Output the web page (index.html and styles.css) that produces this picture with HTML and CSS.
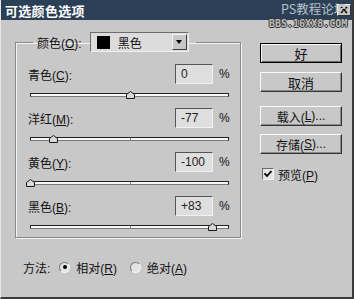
FILE: index.html
```html
<!DOCTYPE html>
<html lang="zh-CN">
<head>
    <meta charset="UTF-8">
    <title>可选颜色选项</title>
    <link rel="stylesheet" href="styles.css">
</head>
<body>
    <div class="window">
        <div class="titlebar">
            <span class="title">可选颜色选项</span>
            <span class="close">
                <svg width="12" height="10" viewBox="0 0 12 10"><path d="M3 2 L9 8 M9 2 L3 8" stroke="#000" stroke-width="1.6"/></svg>
            </span>
            <span class="mark">PS教程论坛</span>
            <span class="mark-url">BBS.16XX8.COM</span>
        </div>

        <div class="content">
            <div class="left">
                <fieldset class="group">
                    <legend class="legend">
                        <span class="legend-label">颜色(<u>O</u>):</span>
                        <span class="select">
                            <span class="swatch"></span>
                            <span class="select-text">黑色</span>
                            <span class="select-arrow"></span>
                        </span>
                    </legend>

                    <div class="row">
                        <div class="row-top">
                            <span class="row-label">青色(<u>C</u>):</span>
                            <span class="field">0</span>
                            <span class="pct">%</span>
                        </div>
                        <div class="slider">
                            <div class="track"></div>
                            <svg class="thumb" style="left: 50%;" width="9" height="8" viewBox="0 0 9 8"><polygon points="0.5,7.5 0.5,3.5 4.5,0.5 8.5,3.5 8.5,7.5" fill="#d8d8d8" stroke="#1a1a1a"/></svg>
                        </div>
                    </div>

                    <div class="row">
                        <div class="row-top">
                            <span class="row-label">洋红(<u>M</u>):</span>
                            <span class="field">-77</span>
                            <span class="pct">%</span>
                        </div>
                        <div class="slider">
                            <div class="track"></div>
                            <svg class="thumb" style="left: 11.5%;" width="9" height="8" viewBox="0 0 9 8"><polygon points="0.5,7.5 0.5,3.5 4.5,0.5 8.5,3.5 8.5,7.5" fill="#d8d8d8" stroke="#1a1a1a"/></svg>
                        </div>
                    </div>

                    <div class="row">
                        <div class="row-top">
                            <span class="row-label">黄色(<u>Y</u>):</span>
                            <span class="field">-100</span>
                            <span class="pct">%</span>
                        </div>
                        <div class="slider">
                            <div class="track"></div>
                            <svg class="thumb" style="left: 0%;" width="9" height="8" viewBox="0 0 9 8"><polygon points="0.5,7.5 0.5,3.5 4.5,0.5 8.5,3.5 8.5,7.5" fill="#d8d8d8" stroke="#1a1a1a"/></svg>
                        </div>
                    </div>

                    <div class="row">
                        <div class="row-top">
                            <span class="row-label">黑色(<u>B</u>):</span>
                            <span class="field">+83</span>
                            <span class="pct">%</span>
                        </div>
                        <div class="slider">
                            <div class="track"></div>
                            <svg class="thumb" style="left: 91.5%;" width="9" height="8" viewBox="0 0 9 8"><polygon points="0.5,7.5 0.5,3.5 4.5,0.5 8.5,3.5 8.5,7.5" fill="#d8d8d8" stroke="#1a1a1a"/></svg>
                        </div>
                    </div>
                </fieldset>

                <div class="method">
                    <span class="method-label">方法:</span>
                    <span class="radio checked"></span>
                    <span class="radio-text">相对(<u>R</u>)</span>
                    <span class="radio"></span>
                    <span class="radio-text">绝对(<u>A</u>)</span>
                </div>
            </div>

            <div class="right">
                <div class="btn default">好</div>
                <div class="btn btn-cancel">取消</div>
                <div class="btn btn-load">载入(<u>L</u>)...</div>
                <div class="btn btn-save">存储(<u>S</u>)...</div>
                <div class="preview">
                    <span class="checkbox">
                        <svg width="8" height="8" viewBox="0 0 8 8"><path d="M0.5 3.5 L3 6 L7.5 1" fill="none" stroke="#000" stroke-width="1.8"/></svg>
                    </span>
                    <span>预览(<u>P</u>)</span>
                </div>
            </div>
        </div>
    </div>
</body>
</html>
```

FILE: styles.css
```css
html, body {
    margin: 0;
    padding: 0;
}
body {
    font-family: "Liberation Sans", "Noto Sans CJK SC", sans-serif;
    font-size: 12px;
    color: #111;
    background: #c8c8c8;
}
u {
    text-decoration: underline;
    text-underline-offset: 1px;
}
.window {
    width: 354px;
    height: 299px;
    box-sizing: border-box;
    background: #c8c8c8;
    border-right: 2px solid #3a3a3a;
    border-bottom: 2px solid #3a3a3a;
    border-left: 1px solid #e6e6e6;
    position: relative;
    overflow: hidden;
}
.titlebar {
    height: 20px;
    background: #2b4056;
    display: flex;
    align-items: center;
    padding-left: 4px;
    position: relative;
}
.title {
    color: #fff;
    font-weight: bold;
    font-size: 13px;
    letter-spacing: 0.3px;
}
.close {
    position: absolute;
    left: 336px;
    top: 4px;
    width: 14px;
    height: 12px;
    box-sizing: border-box;
    background: #c8c8c8;
    border: 1px solid #fff;
    border-right-color: #333;
    border-bottom-color: #333;
    display: flex;
    align-items: center;
    justify-content: center;
}
.mark {
    position: absolute;
    left: 280px;
    top: 3px;
    color: #b8c0c8;
    font-family: "Noto Sans CJK SC", sans-serif;
    font-size: 12.5px;
    line-height: 12px;
}
.mark-url {
    position: absolute;
    left: 268px;
    top: 19px;
    color: #c0c0c0;
    font-family: "DejaVu Sans Mono", monospace;
    font-size: 10px;
    line-height: 9px;
    font-weight: bold;
    text-shadow: 1px 0 0 #333, -1px 0 0 #333, 0 1px 0 #333, 0 -1px 0 #333;
    z-index: 2;
}
.content {
    display: flex;
}
.left {
    width: 240px;
    padding-left: 14px;
    padding-top: 12px;
    box-sizing: border-box;
}
.group {
    margin: 0;
    width: 226px;
    box-sizing: border-box;
    padding: 12px 10px 5px 12px;
    border: 1px solid #8a8a8a;
    box-shadow: inset 1px 1px 0 #f4f4f4, 1px 1px 0 #f4f4f4;
}
.legend {
    display: flex;
    align-items: center;
    padding: 0 7px 0 4px;
    margin-left: 5px;
    height: 20px;
}
.legend-label {
    margin-right: 8px;
}
.select {
    display: flex;
    align-items: center;
    width: 99px;
    height: 20px;
    box-sizing: border-box;
    background: #dcdcdc;
    border: 1px solid #6e6e6e;
    border-right-color: #f0f0f0;
    border-bottom-color: #f0f0f0;
    padding: 0 1px 0 6px;
}
.swatch {
    width: 13px;
    height: 13px;
    background: #000;
}
.select-text {
    margin-left: 8px;
    flex: 1;
}
.select-arrow {
    width: 15px;
    height: 16px;
    box-sizing: border-box;
    background: #c8c8c8;
    border: 1px solid #f4f4f4;
    border-right-color: #404040;
    border-bottom-color: #404040;
    position: relative;
}
.select-arrow::after {
    content: "";
    position: absolute;
    left: 3px;
    top: 5px;
    border-left: 3.5px solid transparent;
    border-right: 3.5px solid transparent;
    border-top: 4px solid #000;
}
.row {
    height: 36px;
    margin-bottom: 8px;
}
.row:last-child {
    margin-bottom: 0;
}
.row-top {
    display: flex;
    align-items: center;
    height: 20px;
}
.row-label {
    flex: 1;
}
.field {
    width: 38px;
    height: 20px;
    box-sizing: border-box;
    background: #dedede;
    border: 1px solid #555;
    border-right-color: #f2f2f2;
    border-bottom-color: #f2f2f2;
    padding-left: 5px;
    line-height: 18px;
    color: #222;
}
.pct {
    width: 11px;
    margin-left: 6px;
}
.slider {
    position: relative;
    height: 16px;
    margin: 0 1px 0 2px;
}
.track {
    position: absolute;
    left: 0;
    right: 0;
    top: 9px;
    height: 2px;
    background: #f6f6f6;
    border: 1px solid #222;
    border-bottom-color: #7a7a7a;
}
.track::after {
    content: "";
    position: absolute;
    left: 50%;
    top: 0;
    width: 1px;
    height: 2px;
    background: #888;
}
.thumb {
    position: absolute;
    top: 7px;
    margin-left: -4px;
    display: block;
}
.method {
    display: flex;
    align-items: center;
    height: 20px;
    margin-top: 19px;
    margin-left: 8px;
}
.method-label {
    margin-right: 9px;
}
.radio {
    width: 11px;
    height: 11px;
    box-sizing: border-box;
    border-radius: 50%;
    background: #e4e4e4;
    border: 1px solid #7a7a7a;
    border-right-color: #f4f4f4;
    border-bottom-color: #f4f4f4;
    margin-right: 6px;
    position: relative;
}
.radio.checked::after {
    content: "";
    position: absolute;
    left: 2.5px;
    top: 2.5px;
    width: 4px;
    height: 4px;
    border-radius: 50%;
    background: #000;
}
.radio-text {
    margin-right: 13px;
}
.right {
    margin-left: 19px;
    padding-top: 23px;
    display: flex;
    flex-direction: column;
}
.btn {
    width: 82px;
    height: 20px;
    box-sizing: border-box;
    border: 1px solid #fafafa;
    border-right-color: #333;
    border-bottom-color: #333;
    box-shadow: inset -1px -1px 0 #8a8a8a;
    display: flex;
    align-items: center;
    justify-content: center;
    font-size: 12px;
}
.default {
    border: 1px solid #000;
    box-shadow: inset 1px 1px 0 #fafafa, inset -1px -1px 0 #6a6a6a;
    font-size: 13px;
}
.btn-cancel {
    margin-top: 9px;
    font-size: 13px;
}
.btn-load {
    margin-top: 14px;
}
.btn-save {
    margin-top: 8px;
}
.preview {
    display: flex;
    align-items: center;
    margin-top: 13px;
    margin-left: 2px;
    height: 14px;
}
.checkbox {
    width: 12px;
    height: 12px;
    box-sizing: border-box;
    background: #e4e4e4;
    border: 1px solid #6a6a6a;
    border-right-color: #f4f4f4;
    border-bottom-color: #f4f4f4;
    display: flex;
    align-items: center;
    justify-content: center;
    margin-right: 4px;
}
```
